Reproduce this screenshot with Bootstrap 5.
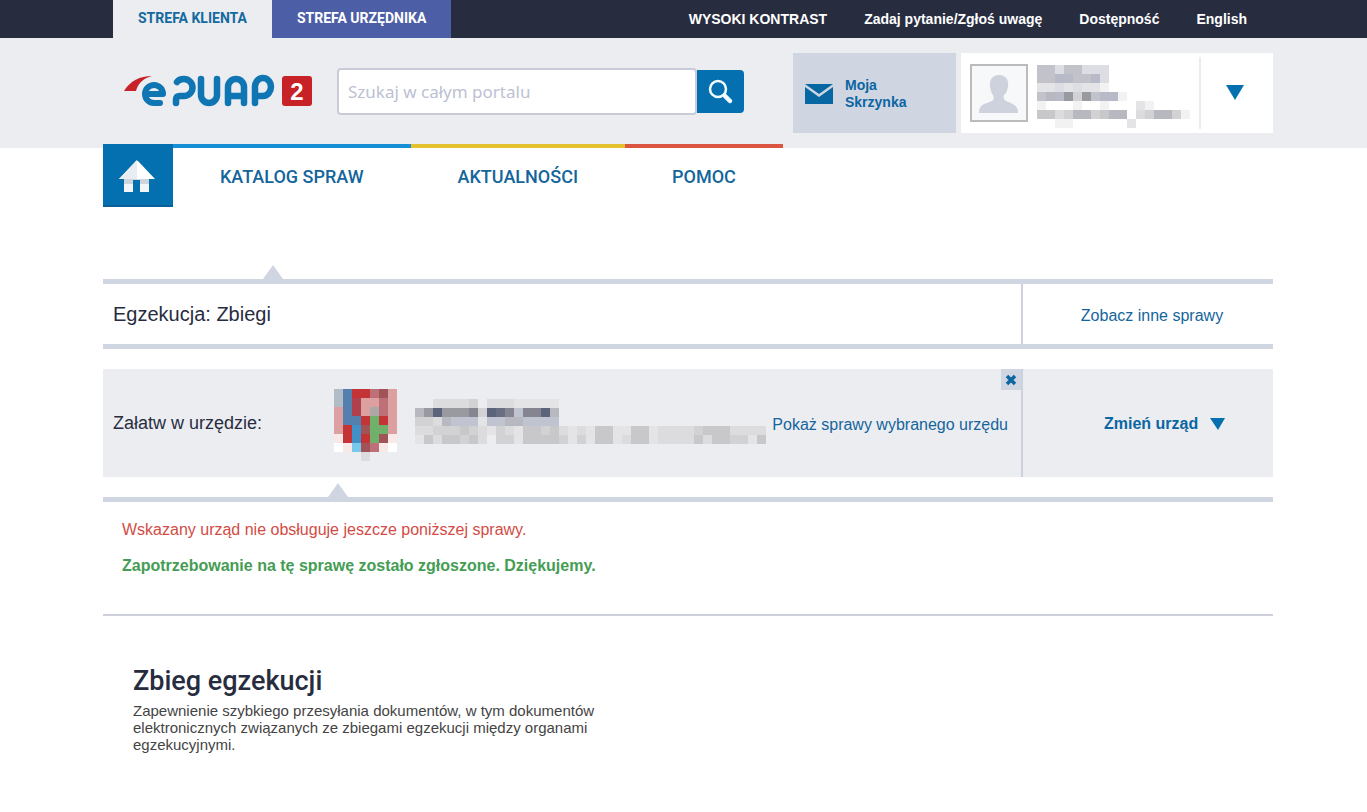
<!DOCTYPE html>
<html lang="pl">
<head>
<meta charset="utf-8">
<meta name="viewport" content="width=device-width, initial-scale=1">
<title>ePUAP – Zbieg egzekucji</title>
<link href="https://cdn.jsdelivr.net/npm/bootstrap@5.3.0/dist/css/bootstrap.min.css" rel="stylesheet">
<style>
:root { --blue: #0470b0; --link: #14659c; --navy: #272c3f; --mist: #ecedf1; --rule: #d0d5e2; }
body { font-family: "Liberation Sans", Arial, sans-serif; font-size: 16px; line-height: 20px; color: var(--navy); background: #fff; }
a { color: var(--link); text-decoration: none; }
svg { display: block; flex-shrink: 0; }
.page-width { max-width: 1179px; padding-left: 9px; padding-right: 0; }
.topbar { background: var(--navy); }
.zone-tabs { margin-left: 10px; }
.zone-tab { font: 700 14px/36px Roboto, sans-serif; height: 38px; padding: 0 25px; color: #fff; background: #4c5ea6; }
.zone-tab.current { color: #14699f; background: var(--mist); }
.top-links { font-size: 14px; font-weight: 700; gap: 37px; padding-right: 26px; }
.top-links a { color: #fff; }
.masthead { background: var(--mist); padding: 15px 0; }
.brand-area { padding: 15px 0 0 21px; }
.search-box { width: 407px; height: 47px; }
.search-box input { height: 47px; border: 2px solid #c9ccd8; border-radius: 4px; padding: 0 9px; font: 17px "Noto Sans", sans-serif; }
.search-box input::placeholder { color: #bcc1d2; opacity: 1; }
.search-box button { width: 47px; height: 43px; border: 0; border-radius: 0 4px 4px 0; background: var(--blue); padding: 0 0 0 11px; }
.inbox { width: 163px; height: 80px; background: var(--rule); color: #0b66a2; font-size: 14px; font-weight: 700; line-height: 17px; padding: 1px 0 0 12px; }
.user-area { gap: 5px; }
.account { width: 312px; height: 80px; padding-left: 9px; }
.avatar { width: 58px; height: 58px; border: 2px solid #bbb; background: #f7f8fa; }
.account .mosaic { margin: 7px 0 0 9px; }
.account-toggle { width: 74px; height: 72px; border: 0; border-left: 2px solid #ebecef; background: none; padding: 0 4px 0 0; }
.main-nav { margin-top: -4px; }
.home-link { width: 70px; height: 63px; background: var(--blue); border-bottom: 2px solid #0a609a; }
.nav-item-link { font: 500 18px/24px Roboto, sans-serif; border-top: 4px solid; padding: 17px 47px 0; }
.nav-item-link span { color: #14659c; }
.strip { border: solid var(--rule); border-width: 5px 0; margin-top: 72px; height: 70px; }
.pointer { position: absolute; top: -19px; left: 160px; width: 20px; height: 14px; background: var(--rule); clip-path: polygon(50% 0, 100% 100%, 0 100%); }
.pointer.further { left: 225px; }
.side-cell { width: 252px; border-left: 2px solid #cdd1dd; }
.strip-title { font-size: 20px; font-weight: 400; padding-left: 10px; }
.office { background: var(--mist); height: 108px; margin-top: 20px; }
.office-label { width: 231px; font-size: 18px; padding-left: 10px; }
.office .mosaic { margin-bottom: 4px; }
.office-link { margin-right: 13px; }
.close-btn { position: absolute; top: 0; right: 0; width: 20px; height: 21px; background: var(--rule); border: 0; padding: 0 0 0 4px; }
.change-btn { background: none; border: 0; font-weight: 700; color: #0b66a2; padding: 2px 0 0; margin-left: 81px; }
.notices { border-top: 5px solid var(--rule); border-bottom: 2px solid #ced1da; margin-top: 20px; padding: 18px 19px 38px; }
.notices p { margin: 0 0 16px; }
.notices p:last-child { margin: 0; }
.case { max-width: 520px; padding: 47px 0 0 30px; font-size: 15px; line-height: 17px; color: #444; }
.case h1 { font: 500 27px/36px Roboto, sans-serif; color: var(--navy); margin: 0 0 3px; }
</style>
</head>
<body>
<div class="topbar">
  <div class="container-fluid page-width d-flex align-items-center justify-content-between">
    <div class="d-flex zone-tabs">
      <a href="#" class="zone-tab current">STREFA KLIENTA</a><a href="#" class="zone-tab">STREFA URZĘDNIKA</a>
    </div>
    <div class="d-flex top-links">
      <a href="#">WYSOKI KONTRAST</a><a href="#">Zadaj pytanie/Zgłoś uwagę</a><a href="#">Dostępność</a><a href="#">English</a>
    </div>
  </div>
</div>

<header class="masthead">
  <div class="container-fluid page-width d-flex justify-content-between">
    <div class="brand-area d-flex align-items-start gap-4">
      <a href="#" aria-label="ePUAP2">
        <svg width="189" height="47" viewBox="0 0 189 47">
          <path d="M0 23C6 13 16 8 28 8C20 10 14 15 12 23Z" fill="#c62227"/>
          <g fill="none" stroke="#0f76b3" stroke-width="6.500" stroke-linecap="round" stroke-linejoin="round">
            <path stroke-width="6" d="M22 26H39A9 9 0 1 0 30 35H36"/>
            <path d="M53 14Q55 11 60 11A8.500 8.500 0 0 1 60 28H56Q52 28 52 32V35"/>
            <path d="M77 11V27A8 8 0 0 0 93 27V11"/>
            <path d="M104 35V19A8 8 0 0 1 120 19V35M104 28H120"/>
            <path d="M131 35V20A8 9 0 1 1 139 28H131"/>
          </g>
          <rect x="158" y="8" width="30" height="30" rx="3" fill="#c62227"/>
          <text x="173" y="32" text-anchor="middle" font-family="Liberation Sans" font-size="24" font-weight="700" fill="#fff">2</text>
        </svg>
      </a>
      <form class="search-box d-flex align-items-center">
        <input type="search" class="flex-grow-1 w-100" placeholder="Szukaj w całym portalu" aria-label="Szukaj w całym portalu">
        <button type="button" class="flex-shrink-0" aria-label="Szukaj">
          <svg width="26" height="26" viewBox="0 0 26 26" fill="none" stroke="#f2fbff"><circle cx="10" cy="10" r="8" stroke-width="2.500"/><path d="M17 17L22 22" stroke-width="4.500" stroke-linecap="round"/></svg>
        </button>
      </form>
    </div>
    <div class="d-flex user-area">
      <a href="#" class="inbox d-flex align-items-center">
        <svg class="me-2" width="32" height="20" viewBox="0 0 32 20"><path d="M0 0H28L14 10Z" fill="#0767a3"/><path d="M0 3L14 13L28 3V20H0Z" fill="#0767a3"/></svg>
        <span>Moja<br>Skrzynka</span>
      </a>
      <div class="account bg-white d-flex align-items-center">
        <div class="avatar flex-shrink-0">
          <svg width="54" height="54" viewBox="0 0 54 54"><path d="M7 47C7 38 13 38 20 35C22 34 22 31 21 29C19 27 19 24 18 21C17 14 20 9 27 9C34 9 37 14 36 21C35 24 35 27 32 29C31 32 32 34 34 35C41 38 46 39 46 47Z" fill="#ced2dc"/></svg>
        </div>
        <svg class="mosaic" width="153" height="63" viewBox="0 0 17 7" data-rows="uutuuttt uuvvuuvt aatataax_ uevfcfuvvx x___x__x___ax ddbceecdee_bceecx __xx______a"></svg>
        <button type="button" class="account-toggle ms-auto d-flex align-items-center justify-content-center" aria-label="Menu użytkownika">
          <svg width="18" height="16"><path d="M0 0H18L9 15Z" fill="#0470b0"/></svg>
        </button>
      </div>
    </div>
  </div>
</header>

<div class="container-fluid page-width">
  <nav class="main-nav d-flex">
    <a href="#" class="home-link" aria-label="Strona główna">
      <svg width="70" height="61"><path d="M33 17Q34 16 35 17L52 35H16Z" fill="#fff"/><path d="M33 17L34 16V35H16Z" fill="#e8edf1"/><path d="M21 35H30V48H21ZM37 35H46V48H37Z" fill="#f3f5f7"/><path d="M21 35H46V36H46V40H37V36H30V40H21Z" fill="#cfd5dc"/></svg>
    </a>
    <a href="#" class="nav-item-link" style="border-color:#178fd6"><span>KATALOG SPRAW</span></a>
    <a href="#" class="nav-item-link" style="border-color:#e4c22f"><span>AKTUALNOŚCI</span></a>
    <a href="#" class="nav-item-link" style="border-color:#dc5542"><span>POMOC</span></a>
  </nav>

  <main>
    <section class="strip position-relative d-flex align-items-stretch">
      <i class="pointer"></i>
      <h2 class="strip-title flex-grow-1 m-0 align-self-center">Egzekucja: Zbiegi</h2>
      <div class="side-cell d-flex align-items-center justify-content-center pt-1 ps-2"><a href="#">Zobacz inne sprawy</a></div>
    </section>

    <section class="office d-flex align-items-stretch">
      <div class="position-relative flex-grow-1 d-flex align-items-center">
        <div class="office-label">Załatw w urzędzie:</div>
        <svg class="mosaic mt-3" width="81" height="81" viewBox="0 0 9 9" data-rows="BNRRPMS BNKSSPS SNKSGPS SNNRVRS SRCMVVS WRCRVMW YWLMPWY ___b"></svg>
        <svg class="mosaic" width="351" height="45" viewBox="0 0 39 5" data-rows="__bbbbc_bbbaaaaa efhfffgchigjgghe ccbejjjajjeejjjj bbcccdcbacbaddcdbabaddaaddabbbbcdddbbbb adbddcdb_ccaddddcacaddabddabbbbdbddccad"></svg>
        <a href="#" class="office-link ms-auto text-nowrap pt-1">Pokaż sprawy wybranego urzędu</a>
        <button type="button" class="close-btn" aria-label="Zamknij"><svg width="12" height="12"><path d="M2 2L10 10M10 2L2 10" stroke="#0b66a2" stroke-width="3.500"/></svg></button>
      </div>
      <div class="side-cell d-flex align-items-center flex-shrink-0">
        <button type="button" class="change-btn d-flex align-items-center">Zmień urząd <svg class="ms-2 ps-1" width="20" height="12"><path d="M0 0H15L8 12Z" fill="#0470b0"/></svg></button>
      </div>
    </section>

    <section class="notices position-relative">
      <i class="pointer further"></i>
      <p style="color:#d34b44">Wskazany urząd nie obsługuje jeszcze poniższej sprawy.</p>
      <p class="fw-bold" style="color:#449d53">Zapotrzebowanie na tę sprawę zostało zgłoszone. Dziękujemy.</p>
    </section>

    <article class="case">
      <h1>Zbieg egzekucji</h1>
      Zapewnienie szybkiego przesyłania dokumentów, w tym dokumentów elektronicznych związanych ze zbiegami egzekucji między organami egzekucyjnymi.
    </article>
  </main>
</div>
<script src="https://cdn.jsdelivr.net/npm/bootstrap@5.3.0/dist/js/bootstrap.bundle.min.js"></script>
<script>
// Pixelated private details: one letter per cell, one word per row.
const palette = {
  a:'#e4e4e7', b:'#dcdcdf', c:'#d2d2d5', d:'#c8c8cb', e:'#b8b9c0', f:'#9999a0', g:'#858591', h:'#5c647b', i:'#696e83', j:'#c0c3d0',
  t:'#dcdee4', u:'#c2c2ca', v:'#b9bac8', x:'#f2f2f3',
  B:'#b0bcc6', N:'#5580ae', R:'#c43436', P:'#bd7078', M:'#a05458', S:'#dda0a0', K:'#b0404c', G:'#aca8a8', V:'#6fb06a', C:'#4191c8', L:'#78c8ec', W:'#f8e8e8', Y:'#ffffff'
};
document.querySelectorAll('.mosaic').forEach(svg => {
  svg.setAttribute('shape-rendering', 'crispEdges');
  svg.innerHTML = svg.dataset.rows.split(' ').map((row, y) => [...row].map((k, x) =>
    k === '_' ? '' : `<rect x="${x}" y="${y}" width="1" height="1" fill="${palette[k]}"/>`).join('')).join('');
});
</script>
</body>
</html>
